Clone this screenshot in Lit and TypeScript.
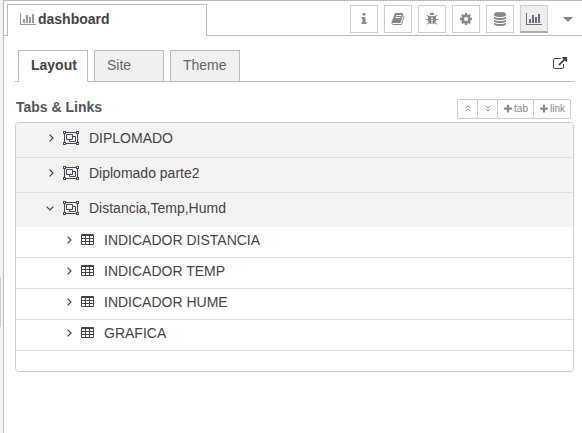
import { LitElement, html, svg, css } from "lit";
import { customElement, property } from "lit/decorators.js";

const DISC = "q237 0 443-43t325-127v170q0 69-103 128t-280 93.5-385 34.5-385-34.5-280-93.5-103-128v-170q119 84 325 127t443 43z";

const GLYPHS: Record<string, { w: number; d: string }> = {
  info: { w: 1792, d: "M1216 1344v128q0 26-19 45t-45 19h-512q-26 0-45-19t-19-45v-128q0-26 19-45t45-19h64v-384h-64q-26 0-45-19t-19-45v-128q0-26 19-45t45-19h384q26 0 45 19t19 45v576h64q26 0 45 19t19 45zm-128-1152v192q0 26-19 45t-45 19h-256q-26 0-45-19t-19-45v-192q0-26 19-45t45-19h256q26 0 45 19t19 45z" },
  book: { w: 1792, d: "M1703 478q40 57 18 129l-275 906q-19 64-76.5 107.5t-122.5 43.5h-923q-77 0-148.5-53.5t-99.5-131.5q-24-67-2-127 0-4 3-27t4-37q1-8-3-21.5t-3-19.5q2-11 8-21t16.5-23.5 16.5-23.5q23-38 45-91.5t30-91.5q3-10 .5-30t-.5-28q3-11 17-28t17-23q21-36 42-92t25-90q1-9-2.5-32t.5-28q4-13 22-30.5t22-22.5q19-26 42.5-84.5t27.5-96.5q1-8-3-25.5t-2-26.5q2-8 9-18t18-23 17-21q8-12 16.5-30.5t15-35 16-36 19.5-32 26.5-23.5 36-11.5 47.5 5.5l-1 3q38-9 51-9h761q74 0 114 56t18 130l-274 906q-36 119-71.5 153.5t-128.5 34.5h-869q-27 0-38 15-11 16-1 43 24 70 144 70h923q29 0 56-15.5t35-41.5l300-987q7-22 5-57 38 15 59 43zm-1064 2q-4 13 2 22.5t20 9.5h608q13 0 25.5-9.5t16.5-22.5l21-64q4-13-2-22.5t-20-9.5h-608q-13 0-25.5 9.5t-16.5 22.5zm-83 256q-4 13 2 22.5t20 9.5h608q13 0 25.5-9.5t16.5-22.5l21-64q4-13-2-22.5t-20-9.5h-608q-13 0-25.5 9.5t-16.5 22.5z" },
  bug: { w: 1792, d: "M1696 960q0 26-19 45t-45 19h-224q0 171-67 290l208 209q19 19 19 45t-19 45q-18 19-45 19t-45-19l-198-197q-5 5-15 13t-42 28.5-65 36.5-82 29-97 13v-896h-128v896q-51 0-101.5-13.5t-87-33-66-39-43.5-32.5l-15-14-183 207q-20 21-48 21-24 0-43-16-19-18-20.5-44.5t15.5-46.5l202-227q-58-114-58-274h-224q-26 0-45-19t-19-45 19-45 45-19h224v-294l-173-173q-19-19-19-45t19-45 45-19 45 19l173 173h844l173-173q19-19 45-19t45 19 19 45-19 45l-173 173v294h224q26 0 45 19t19 45zm-480-576h-640q0-133 93.5-226.5t226.5-93.5 226.5 93.5 93.5 226.5z" },
  cog: { w: 1792, d: "M1152 896q0-106-75-181t-181-75-181 75-75 181 75 181 181 75 181-75 75-181zm512-109v222q0 12-8 23t-20 13l-185 28q-19 54-39 91 35 50 107 138 10 12 10 25t-9 23q-27 37-99 108t-94 71q-12 0-26-9l-138-108q-44 23-91 38-16 136-29 186-7 28-36 28h-222q-14 0-24.5-8.5t-11.5-21.5l-28-184q-49-16-90-37l-141 107q-10 9-25 9-14 0-25-11-126-114-165-168-7-10-7-23 0-12 8-23 15-21 51-66.5t54-70.5q-27-50-41-99l-183-27q-13-2-21-12.5t-8-23.5v-222q0-12 8-23t19-13l186-28q14-46 39-92-40-57-107-138-10-12-10-24 0-10 9-23 26-36 98.5-107.5t94.5-71.5q13 0 26 10l138 107q44-23 91-38 16-136 29-186 7-28 36-28h222q14 0 24.5 8.5t11.5 21.5l28 184q49 16 90 37l142-107q9-9 24-9 13 0 25 10 129 119 165 170 7 8 7 22 0 12-8 23-15 21-51 66.5t-54 70.5q26 50 41 98l183 28q13 2 21 12.5t8 23.5z" },
  database: { w: 1792, d: `M896 768${DISC}M896 1536${DISC}M896 1152${DISC}M896 0q208 0 385 34.5t280 93.5 103 128v128q0 69-103 128t-280 93.5-385 34.5-385-34.5-280-93.5-103-128v-128q0-69 103-128t280-93.5 385-34.5z` },
  chart: { w: 2048, d: "M640 896v512h-256v-512h256zm384-512v1024h-256v-1024h256zm1024 1152v128h-2048v-1536h128v1408h1920zm-640-896v768h-256v-768h256zm384-384v1152h-256v-1152h256z" },
  external: { w: 1792, d: "M1408 928v320q0 119-84.5 203.5t-203.5 84.5h-832q-119 0-203.5-84.5t-84.5-203.5v-832q0-119 84.5-203.5t203.5-84.5h704q14 0 23 9t9 23v64q0 14-9 23t-23 9h-704q-66 0-113 47t-47 113v832q0 66 47 113t113 47h832q66 0 113-47t47-113v-320q0-14 9-23t23-9h64q14 0 23 9t9 23zm384-864v512q0 26-19 45t-45 19-45-19l-176-176-652 652q-10 10-23 10t-23-10l-114-114q-10-10-10-23t10-23l652-652-176-176q-19-19-19-45t19-45 45-19h512q26 0 45 19t19 45z" },
  plus: { w: 1792, d: "M1600 736v192q0 40-28 68t-68 28h-416v416q0 40-28 68t-68 28h-192q-40 0-68-28t-28-68v-416h-416q-40 0-68-28t-28-68v-192q0-40 28-68t68-28h416v-416q0-40 28-68t68-28h192q40 0 68 28t28 68v416h416q40 0 68 28t28 68z" },
};

const glyph = (name: string, size: number) => {
  const g = GLYPHS[name];
  return html`<svg width=${(size * g.w) / 1792} height=${size} viewBox="0 0 ${g.w} 1792" fill="currentColor"><path d=${g.d}></path></svg>`;
};

const stroke = (w: number, h: number, d: string, width = 1.2) =>
  html`<svg width=${w} height=${h} viewBox="0 0 ${w} ${h}" fill="none" stroke="currentColor" stroke-width=${width}><path d=${d}></path></svg>`;

const corner = (x: number, y: number) =>
  svg`<rect x=${x + 0.5} y=${y + 0.5} width="2" height="2" fill="#f3f3f3"></rect>`;

const groupIcon = html`<svg width="16" height="14" viewBox="0 0 16 14" fill="none" stroke="#4d4452" stroke-width="1">
  <rect x="1.5" y="1.5" width="13" height="11"></rect>
  <path d="M3.5 3.5h6v5h-6zM9.5 5.5h3v5h-6v-2"></path>
  ${corner(0, 0)}${corner(13, 0)}${corner(0, 11)}${corner(13, 11)}
</svg>`;

const tableIcon = html`<svg width="13" height="11" viewBox="0 0 13 11">
  <rect width="13" height="11" rx="1" fill="#444"></rect>
  <path fill="#fff" d="M1 2h3v2H1zM5 2h3v2H5zM9 2h3v2H9zM1 5h3v2H1zM5 5h3v2H5zM9 5h3v2H9zM1 8h3v2H1zM5 8h3v2H5zM9 8h3v2H9z"></path>
</svg>`;

@customElement("tree-row")
class TreeRow extends LitElement {
  @property() label = "";
  @property({ type: Boolean, reflect: true }) nested = false;
  @property({ type: Boolean, reflect: true }) open = false;

  static styles = css`
    :host { display: flex; align-items: flex-start; box-sizing: border-box; height: 35px; background: #f3f3f3; border-bottom: 1px solid #ddd; }
    :host([open]) { height: 34px; border-bottom: 0; }
    :host([nested]) { height: 31px; background: #fff; }
    svg { display: block; }
    .toggle { width: 8px; margin: 11px 0 0 31px; display: flex; justify-content: center; }
    :host([open]) .toggle { margin: 13px 1px 0 30px; }
    .icon { width: 16px; margin: 8px 0 0 8px; }
    .label { margin: 7px 0 0 10px; line-height: 16px; white-space: nowrap; }
    :host([nested]) .toggle { margin: 9px 0 0 49px; }
    :host([nested]) .icon { width: 13px; margin: 7px 0 0 8px; }
    :host([nested]) .label { margin: 5px 0 0 10px; }
  `;

  render() {
    return html`
      <span class="toggle">${this.open ? stroke(8, 5, "M.6.6 4 4 7.4.6") : stroke(5, 8, "M.6.6 4 4 .6 7.4")}</span>
      <span class="icon">${this.nested ? tableIcon : groupIcon}</span>
      <span class="label">${this.label}</span>
    `;
  }
}

@customElement("app-root")
class AppRoot extends LitElement {
  static styles = css`
    :host { display: flex; height: 433px; background: #f3f3f3; color: #444; font: 14px "Liberation Sans", Arial, sans-serif; overflow: hidden; }
    * { box-sizing: border-box; }
    svg { display: block; }
    .gutter { width: 3px; padding-top: 277px; }
    .thumb { width: 1px; height: 50px; background: #ccc; }
    .panel { flex: 1; background: #fff; border: solid #bbb; border-width: 1px 0 0 1px; }
    .top { display: flex; height: 35px; }
    .lead { width: 3px; border-bottom: 1px solid #bbb; }
    .title { display: flex; width: 200px; margin-top: 3px; padding: 6px 0 0 12px; border: solid #bbb; border-width: 1px 1px 0; font-weight: bold; line-height: 16px; }
    .title svg { margin: 1px 2px 0 0; color: #999; }
    .tools { flex: 1; display: flex; align-items: flex-start; justify-content: flex-end; gap: 6px; padding: 4px 9px 0 0; border-bottom: 1px solid #bbb; }
    .tool { display: flex; align-items: center; justify-content: center; width: 28px; height: 28px; border: 1px solid #ccc; color: #888; }
    .tool.on { background: #eee; border-bottom: 2px solid #aaa; color: #706878; }
    .caret { margin: 12px 0 0 9px; border: 5px solid transparent; border-top-color: #888; border-bottom: 0; }
    .body { padding: 14px 8px 0 11px; }
    .tabs { display: flex; gap: 6px; height: 32px; padding-left: 3px; box-shadow: inset 0 -1px #bbb; }
    .tab { width: 70px; padding: 6px 0 0 12px; border: 1px solid #bbb; background: #f0f0f0; color: #666; line-height: 16px; }
    .tab.on { background: #fff; border-bottom-color: #fff; color: #444; font-weight: bold; }
    .open { margin: 7px 7px 0 auto; color: #444; }
    .head { display: flex; height: 40px; padding-right: 3px; justify-content: space-between; }
    .heading { margin: 17px 0 0 1px; font-weight: bold; color: #555; line-height: 16px; }
    .acts { display: flex; margin-top: 17px; }
    .act { display: flex; align-items: center; justify-content: center; gap: 1px; height: 20px; width: 21px; padding-bottom: 1px; margin-right: -1px; border: 1px solid #ccc; border-radius: 2px; color: #888; font-size: 10px; }
    .act.mid { width: 37px; }
    .act.wide { width: 38px; margin-right: 0; }
    .list { height: 250px; border: 1px solid #ccc; border-radius: 4px; overflow: hidden; }
  `;

  render() {
    return html`
      <div class="gutter"><div class="thumb"></div></div>
      <div class="panel">
        <div class="top">
          <div class="lead"></div>
          <div class="title">${glyph("chart", 14)}dashboard</div>
          <div class="tools">
            ${["info", "book", "bug", "cog", "database", "chart"].map(
              (n) => html`<div class="tool ${n === "chart" ? "on" : ""}">${glyph(n, 14)}</div>`
            )}
            <div class="caret"></div>
          </div>
        </div>
        <div class="body">
          <div class="tabs">
            <div class="tab on">Layout</div>
            <div class="tab">Site</div>
            <div class="tab">Theme</div>
            <div class="open">${glyph("external", 14)}</div>
          </div>
          <div class="head">
            <div class="heading">Tabs &amp; Links</div>
            <div class="acts">
              <div class="act">${stroke(6, 7, "M.5 3.3 3 .8l2.5 2.5M.5 6.3 3 3.8l2.5 2.5", 1)}</div>
              <div class="act">${stroke(6, 7, "M.5.7 3 3.2 5.5.7M.5 3.7 3 6.2l2.5-2.5", 1)}</div>
              <div class="act mid">${glyph("plus", 10)}tab</div>
              <div class="act wide">${glyph("plus", 10)}link</div>
            </div>
          </div>
          <div class="list">
            <tree-row label="DIPLOMADO"></tree-row>
            <tree-row label="Diplomado parte2"></tree-row>
            <tree-row label="Distancia,Temp,Humd" open></tree-row>
            ${["INDICADOR DISTANCIA", "INDICADOR TEMP", "INDICADOR HUME", "GRAFICA"].map(
              (l) => html`<tree-row nested label=${l}></tree-row>`
            )}
          </div>
        </div>
      </div>
    `;
  }
}
